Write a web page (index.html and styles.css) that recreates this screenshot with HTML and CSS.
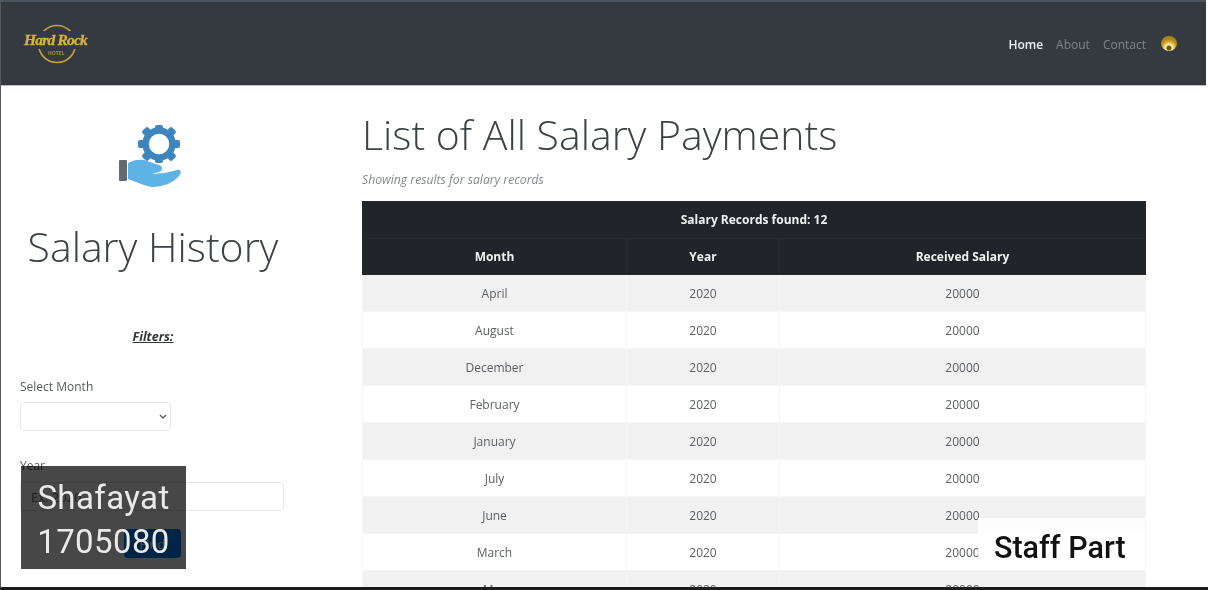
FILE: index.html
```html
<!DOCTYPE html>
<html>
<head>
<meta charset="utf-8">
<title>Salary History</title>
<link rel="stylesheet" href="styles.css">
</head>
<body>
<div class="frame">
  <nav class="topbar">
    <a class="logo" href="#">
      <svg class="logo-ring" width="40" height="40" viewBox="0 0 40 40"><circle cx="20" cy="20" r="18.500" fill="none" stroke="#c2a040" stroke-width="1.700"/></svg>
      <span class="logo-name">Hard Rock</span>
      <span class="logo-sub">HOTEL</span>
    </a>
    <ul class="nav-links">
      <li class="active">Home</li>
      <li>About</li>
      <li>Contact</li>
      <li class="nav-avatar"></li>
    </ul>
  </nav>

  <div class="content">
    <aside class="side">
      <svg class="side-icon" width="62" height="62" viewBox="0 0 62 62">
        <g fill="#3e85bd">
          <rect x="36" y="0" width="8" height="8" rx="2"/>
          <rect x="36" y="30" width="8" height="8" rx="2"/>
          <rect x="19" y="15" width="8" height="8" rx="2"/>
          <rect x="53" y="15" width="8" height="8" rx="2"/>
          <rect x="36" y="-2" width="8" height="8" rx="2" transform="rotate(45 40 19)"/>
          <rect x="36" y="-2" width="8" height="8" rx="2" transform="rotate(135 40 19)"/>
          <rect x="36" y="-2" width="8" height="8" rx="2" transform="rotate(225 40 19)"/>
          <rect x="36" y="-2" width="8" height="8" rx="2" transform="rotate(315 40 19)"/>
        </g>
        <circle cx="40" cy="19" r="13.500" fill="none" stroke="#3e85bd" stroke-width="6.500"/>
        <rect x="0" y="35" width="8" height="21" rx="1" fill="#666a6e"/>
        <path d="M9 38C14 35 20 34 25 35L40 40C44 41 44 46 40 47L32 49 46 48 58 45C62 44 63 48 60 51 54 58 44 62 33 62 25 61 18 57 9 54Z" fill="#5eb3e6"/>
      </svg>
      <h2 class="side-title">Salary History</h2>
      <p class="filters-head">Filters:</p>
      <form class="filters">
        <label class="field-label">Select Month</label>
        <select class="field month-select"><option></option></select>
        <label class="field-label year-label">Year</label>
        <input class="field year-input" type="text" placeholder="Ex: 2020">
        <button class="btn-find" type="button">Find</button>
      </form>
    </aside>

    <main class="records">
      <h1 class="records-title">List of All Salary Payments</h1>
      <p class="records-note">Showing results for salary records</p>
      <table class="salary-table">
        <colgroup><col class="col-month"><col class="col-year"><col></colgroup>
        <thead>
          <tr><th colspan="3">Salary Records found: 12</th></tr>
          <tr><th>Month</th><th>Year</th><th>Received Salary</th></tr>
        </thead>
        <tbody>
          <tr><td>April</td><td>2020</td><td>20000</td></tr>
          <tr><td>August</td><td>2020</td><td>20000</td></tr>
          <tr><td>December</td><td>2020</td><td>20000</td></tr>
          <tr><td>February</td><td>2020</td><td>20000</td></tr>
          <tr><td>January</td><td>2020</td><td>20000</td></tr>
          <tr><td>July</td><td>2020</td><td>20000</td></tr>
          <tr><td>June</td><td>2020</td><td>20000</td></tr>
          <tr><td>March</td><td>2020</td><td>20000</td></tr>
          <tr><td>May</td><td>2020</td><td>20000</td></tr>
        </tbody>
      </table>
    </main>
  </div>

  <div class="caption-name"><span class="caption-text">Shafayat<br>1705080</span></div>
  <div class="caption-part">Staff Part</div>
</div>
</body>
</html>
```

FILE: styles.css
```css
*{margin:0;padding:0;box-sizing:border-box;list-style:none;}
html,body{height:590px;overflow:hidden;background:#fff;}
body{font-family:"Open Sans","Noto Sans","Liberation Sans",sans-serif;color:#212529;}

.frame{position:relative;width:1208px;height:590px;overflow:hidden;background:#fff;border-left:1px solid #55585c;border-bottom:3px solid #1c1c1c;}

.topbar{display:flex;align-items:center;justify-content:space-between;height:86px;margin-right:2px;padding:0 29px 0 22px;background:#343a40;border-top:2px solid #4a545c;border-bottom:1px solid #b9bcc0;}
.logo{position:relative;display:block;width:64px;height:40px;text-decoration:none;}
.logo-ring{position:absolute;left:14px;top:0;}
.logo-name{position:absolute;left:0;top:7px;padding:0 1px;font-family:"Liberation Serif",serif;font-size:15.500px;line-height:18px;font-weight:bold;font-style:italic;letter-spacing:-.8px;-webkit-text-stroke:.3px #d8b144;color:#d8b144;white-space:nowrap;background:#343a40;}
.logo-sub{position:absolute;left:25px;top:26px;font-size:5px;font-weight:bold;color:#a68d45;}
.nav-links{display:flex;align-items:center;gap:13px;padding-top:2px;font-size:12px;color:#80858a;}
.nav-links .active{color:#e9eef0;font-weight:600;}
.nav-avatar{width:16px;height:15px;margin:-3px 0 0 2px;border-radius:50%;background:radial-gradient(circle at 50% 80%,#6b5417 0 2px,#f8e9a8 3px 4px,#e3b02d 6px,#a9851f 9px);}

.content{display:flex;}
.side{width:304px;padding:39px 19px 0;display:flex;flex-direction:column;}
.side-icon{display:block;margin:0 0 0 99px;}
.side-title{margin-top:29px;text-align:center;font-size:41px;line-height:60px;font-weight:300;color:#3d4246;white-space:nowrap;}
.filters-head{margin-top:52px;text-align:center;font-size:12.500px;line-height:18px;font-weight:700;font-style:italic;text-decoration:underline;color:#33373b;}
.filters{display:flex;flex-direction:column;align-items:flex-start;margin-top:32px;}
.field-label{font-size:12px;line-height:18px;color:#555a5f;}
.field{height:29px;margin-top:6px;background:#fff;border:1px solid #e3e5e8;border-radius:4px;font-family:inherit;font-size:13px;color:#6c757d;}
.month-select{width:151px;appearance:none;background:#fff url("data:image/svg+xml,%3Csvg xmlns='http://www.w3.org/2000/svg' width='8' height='6'%3E%3Cpath d='M1 1l3 3 3-3' fill='none' stroke='%23666' stroke-width='1.500'/%3E%3C/svg%3E") no-repeat right 3px center;}
.year-label{margin-top:26px;}
.year-input{width:264px;margin-top:7px;padding:0 10px;}
.btn-find{width:57px;height:29px;margin:18px 0 0 104px;background:#0084f5;border:none;border-radius:4px;font-family:inherit;font-size:13px;color:#fff;}

.records{width:784px;margin-left:57px;}
.records-title{margin-top:21px;font-size:41px;line-height:54px;font-weight:300;color:#3d4246;white-space:nowrap;}
.records-note{margin-top:11px;font-size:12.200px;line-height:16px;font-style:italic;color:#85898d;}
.salary-table{width:784px;margin-top:13px;border-collapse:collapse;table-layout:fixed;font-size:12px;text-align:center;}
.col-month{width:264px;}
.col-year{width:153px;}
.salary-table th{height:36.500px;background:#212429;color:#f2f2f2;font-weight:700;border:1px solid #262a2e;}
.salary-table td{height:37px;color:#5c6064;border:1px solid #f6f6f7;}
.salary-table tbody tr:nth-child(odd) td{background:#f1f1f2;}

.caption-name{position:absolute;left:20px;top:466px;width:165px;height:103px;padding-top:10px;color:#eaeaea;font-family:Roboto,sans-serif;font-size:33px;line-height:44px;text-align:center;letter-spacing:.4px;}
.caption-name::before{content:"";position:absolute;inset:0;background:#474747;mix-blend-mode:multiply;}
.caption-text{position:relative;display:block;}
.caption-part{position:absolute;left:977px;top:518px;width:167px;height:51px;padding-left:16px;background:rgba(255,255,255,.85);color:#111;font-family:Roboto,sans-serif;font-size:30.500px;font-weight:500;line-height:59px;white-space:nowrap;}
```
